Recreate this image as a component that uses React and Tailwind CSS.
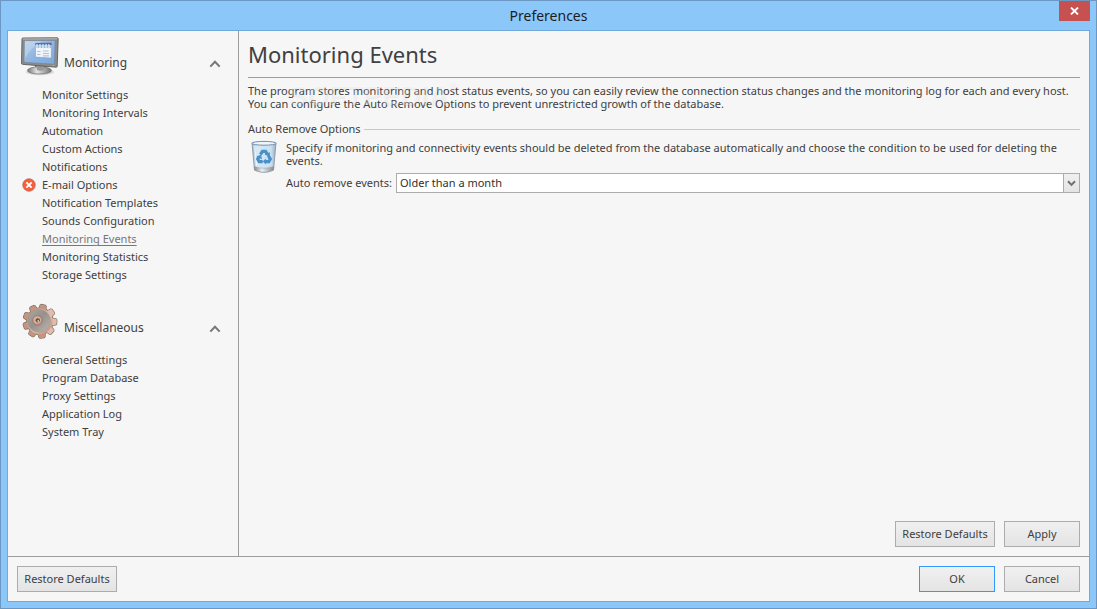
import React from "react";

const sections = [
  {
    title: "Monitoring",
    Icon: MonitorIcon,
    items: [
      { label: "Monitor Settings" },
      { label: "Monitoring Intervals" },
      { label: "Automation" },
      { label: "Custom Actions" },
      { label: "Notifications" },
      { label: "E-mail Options", error: true },
      { label: "Notification Templates" },
      { label: "Sounds Configuration" },
      { label: "Monitoring Events", current: true },
      { label: "Monitoring Statistics" },
      { label: "Storage Settings" },
    ],
  },
  {
    title: "Miscellaneous",
    Icon: GearIcon,
    items: [
      { label: "General Settings" },
      { label: "Program Database" },
      { label: "Proxy Settings" },
      { label: "Application Log" },
      { label: "System Tray" },
    ],
  },
];

function MonitorIcon() {
  return (
    <svg width="40" height="40" viewBox="0 0 40 40" aria-hidden="true">
      <defs>
        <linearGradient id="screen" x1="0" y1="0" x2="1" y2="1">
          <stop offset="0" stopColor="#b4cdea" />
          <stop offset="0.5" stopColor="#8fb5e0" />
          <stop offset="1" stopColor="#7aa8dc" />
        </linearGradient>
        <linearGradient id="stand" x1="0" y1="0" x2="1" y2="0">
          <stop offset="0" stopColor="#777" />
          <stop offset="0.4" stopColor="#e4e4e4" />
          <stop offset="1" stopColor="#707070" />
        </linearGradient>
      </defs>
      <ellipse cx="20" cy="36" rx="14" ry="3.2" fill="#000" opacity="0.12" />
      <path d="M15 29h11v6H15z" fill="#6f6f6f" />
      <ellipse cx="19.5" cy="34.4" rx="12" ry="3.6" fill="url(#stand)" stroke="#707070" strokeWidth="0.7" />
      <path d="M16 29l1 5q3 1.5 7 0l1-4z" fill="#999" />
      <path d="M2 2.8Q2 2 3 2l34-.2q1.2 0 1.200 1l-1 27.400q0 1-1 1L2.500 28.300q-1 0-1-1z" fill="#8b8c8d" stroke="#5b5c5d" strokeWidth="0.9" />
      <path d="M2.800 3l34.400-.2" stroke="#c9c9c9" strokeWidth="0.8" />
      <path d="M4.500 4.700l30.600-.2-.7 23.700-30.300-1.900z" fill="url(#screen)" stroke="#6b7480" strokeWidth="0.4" />
      <path d="M4.900 5h17.500Q9 12 4.500 24z" fill="#fff" opacity="0.22" />
      <path d="M15.500 7.500l16-.3-.3 14.800-15.700-.9z" fill="#f0f5fc" stroke="#8197b3" strokeWidth="0.5" />
      <path d="M15.300 6.900l16.400-.2v2.300H15.300z" fill="#4f76a8" />
      <path d="M15.500 9h16v3h-16z" fill="#9dbde0" />
      <path d="M17 8v4m3-4v4m3-4v4m3-4v4m3-4v4" stroke="#e9f2fb" strokeWidth="1.200" />
      <circle cx="30.200" cy="7.900" r="0.700" fill="#a33d54" />
      <path d="M17 15.500h3.500m2.500-.5h5.500M17 18.500h3.500m2.500-1h6m-6 2.300h6" stroke="#b3c0d3" strokeWidth="1.200" />
      <path d="M32.500 29.400h1.600" stroke="#85dc55" strokeWidth="1" />
    </svg>
  );
}

function GearIcon() {
  const teeth = [0, 40, 80, 120, 160, 200, 240, 280, 320];
  return (
    <svg width="40" height="40" viewBox="0 0 40 40" aria-hidden="true">
      <defs>
        <linearGradient id="copper" gradientUnits="userSpaceOnUse" x1="4" y1="4" x2="34" y2="34">
          <stop offset="0" stopColor="#a88474" />
          <stop offset="0.350" stopColor="#c9a595" />
          <stop offset="0.600" stopColor="#e0beac" />
          <stop offset="1" stopColor="#b98068" />
        </linearGradient>
        <linearGradient id="steel" x1="0" y1="0" x2="1" y2="1">
          <stop offset="0" stopColor="#aaa6a2" />
          <stop offset="0.450" stopColor="#96918d" />
          <stop offset="1" stopColor="#bcb7b2" />
        </linearGradient>
      </defs>
      <g transform="translate(2 1.500) scale(.94)">
        <g transform="rotate(12 19 20)">
          <g fill="#7b6d66" stroke="#7b6d66" strokeWidth="1.300" strokeLinejoin="round">
            <circle cx="19" cy="20" r="14" />
            {teeth.map((a) => (
              <path key={a} transform={`rotate(${a} 19 20)`} d="M15 9l.8-6 1-.9h4.400l1 .9.800 6z" />
            ))}
          </g>
          <circle cx="19" cy="20" r="14" fill="#c99a84" />
          {teeth.map((a) => (
            <path
              key={a}
              transform={`rotate(${a} 19 20)`}
              d="M15 9l.8-6 1-.9h4.400l1 .9.800 6z"
              fill={a > 30 && a < 130 ? "#e0bdac" : "#c39580"}
            />
          ))}
        </g>
        <circle cx="19" cy="20" r="13.500" fill="url(#copper)" />
        <circle cx="18.300" cy="19.700" r="12" fill="url(#steel)" stroke="#9b8e86" strokeWidth="0.400" />
        <circle cx="16.500" cy="19" r="5.300" fill="#b98c78" stroke="#8c7266" strokeWidth="0.600" />
        <circle cx="16.200" cy="18.600" r="4" fill="#d8ae9a" />
        <circle cx="16.800" cy="19" r="2.300" fill="#5d5353" />
        <circle cx="17.300" cy="19.700" r="1" fill="#d5cbc6" />
      </g>
    </svg>
  );
}

function RecycleBinIcon() {
  return (
    <svg width="28" height="34" viewBox="0 0 28 34" aria-hidden="true">
      <defs>
        <linearGradient id="glass" x1="0" y1="0" x2="1" y2="0">
          <stop offset="0" stopColor="#a9bdcd" />
          <stop offset="0.200" stopColor="#d8e9f7" />
          <stop offset="0.800" stopColor="#c9dff2" />
          <stop offset="1" stopColor="#97abbc" />
        </linearGradient>
        <linearGradient id="base" x1="0" y1="0" x2="1" y2="0">
          <stop offset="0" stopColor="#82888d" />
          <stop offset="0.400" stopColor="#eceeef" />
          <stop offset="1" stopColor="#84898d" />
        </linearGradient>
      </defs>
      <path d="M2 3l2.500 27q9.500 4.500 19 0L26 3z" fill="url(#glass)" stroke="#8797a5" strokeWidth="0.900" />
      <path d="M4.200 26.500l.5 3.800q9.300 4 18.600 0l.5-3.800q-9.800 3.500-19.600 0z" fill="url(#base)" stroke="#949ca2" strokeWidth="0.500" />
      <ellipse cx="14" cy="3.300" rx="12.200" ry="1.900" fill="#eef6fd" stroke="#7390a8" strokeWidth="1" />
      <path d="M4.700 6l1.800 20" stroke="#fff" strokeWidth="1" opacity="0.700" />
      <g fill="none" stroke="#4a90c4" strokeWidth="3.200">
        <path d="M10.400 14.600L12.400 11.300h3.200l1.700 2.900" />
        <path d="M18.400 15.700l1.900 3.300-1.500 2.700h-3.600" />
        <path d="M12.700 21.700H9.200L7.700 19l1.500-2.700" />
      </g>
      <g fill="#4a90c4">
        <path d="M14.500 14.500l5.400-2.300v4.600z" />
        <path d="M15.900 18.600v6l-3.200-3z" />
        <path d="M6.400 16.600l4.700-1.900.9 4.700z" />
      </g>
    </svg>
  );
}

function ErrorIcon() {
  return (
    <svg width="14" height="14" viewBox="0 0 14 14" role="img" aria-label="Error">
      <circle cx="7" cy="7" r="6.200" fill="#fb5d37" stroke="#bb6a55" strokeWidth="0.900" />
      <path d="M4.400 4.400l5.200 5.200m0-5.200l-5.200 5.200" stroke="#fff" strokeWidth="2" />
    </svg>
  );
}

function NavSection({ title, Icon, items }) {
  return (
    <section>
      <button type="button" aria-expanded="true" className="flex h-10 w-full items-start text-left">
        <Icon />
        <span className="mt-4 ml-1 flex-1 text-[12px] leading-[22px]">{title}</span>
        <svg className="mt-[23px] mr-[17px]" width="12" height="9" viewBox="0 0 12 9" aria-hidden="true">
          <path d="M1.300 7.600L6 2.700l4.700 4.900" fill="none" stroke="#777" strokeWidth="2" />
        </svg>
      </button>
      <ul className="mt-2.5">
        {items.map((item) => (
          <li key={item.label} className="flex h-[18px] items-center">
            <span className="flex w-[22px] pl-[2px]">{item.error && <ErrorIcon />}</span>
            <a
              href="#"
              aria-current={item.current ? "page" : undefined}
              className={item.current ? "text-[#777] underline underline-offset-2" : ""}
            >
              {item.label}
            </a>
          </li>
        ))}
      </ul>
    </section>
  );
}

function Button({ children, wide, primary }) {
  return (
    <button
      type="button"
      className={`h-[26px] border bg-linear-to-b from-[#f0f0f0] to-[#e4e4e4] ${wide ? "w-[100px]" : "w-[76px]"} ${
        primary ? "border-[#3399ff]" : "border-[#acacac]"
      }`}
    >
      {children}
    </button>
  );
}

export default function App() {
  return (
    <div className="flex min-h-screen flex-col border border-[#6c97c2] bg-[#8cc7fa] px-1.5 pb-1.5 font-['Noto_Sans','Open_Sans',sans-serif] text-[11px] leading-[18px] text-[#404040]">
      <header className="relative flex h-[29px] shrink-0 items-center justify-center">
        <span className="text-[14px] text-[#1c1c1c]">Preferences</span>
        <button
          type="button"
          aria-label="Close"
          className="absolute top-0 right-0 flex h-5 w-[31px] items-center justify-center bg-[#c75050]"
        >
          <svg width="9" height="8" viewBox="0 0 9 8" aria-hidden="true">
            <path d="M1 .5l7 7m0-7l-7 7" stroke="#fff" strokeWidth="1.800" />
          </svg>
        </button>
      </header>

      <div className="flex flex-1 flex-col border border-[#72a9dc] bg-[#f6f6f6]">
        <div className="flex flex-1">
          <nav aria-label="Preferences" className="flex w-[231px] shrink-0 flex-col gap-[17px] border-r border-[#9c9c9c] pt-[5px] pl-3">
            {sections.map((s) => (
              <NavSection key={s.title} {...s} />
            ))}
          </nav>

          <main className="flex min-w-0 flex-1 flex-col px-[9px] pb-[9px]">
            <h1 className="border-b border-[#9c9c9c] pt-[5px] pb-[5px] text-[22px] leading-9">Monitoring Events</h1>
            <div className="relative mt-1.5 leading-[13px]">
              <p>
                The program stores monitoring and host status events, so you can easily review the connection status
                changes and the monitoring log for each and every host.
              </p>
              <p>You can configure the Auto Remove Options to prevent unrestricted growth of the database.</p>
              <span
                aria-hidden="true"
                className="pointer-events-none absolute -top-1 left-10 flex items-start font-['Liberation_Sans',sans-serif] text-[28px] leading-8 font-bold text-white/30 [text-shadow:1px_1px_1px_rgba(0,0,0,0.05)]"
              >
                SOFTPEDIA<span className="text-[12px] leading-3">®</span>
              </span>
            </div>

            <fieldset className="mt-2.5">
              <legend className="flex w-full items-center gap-[3px]">
                Auto Remove Options
                <span className="h-px flex-1 bg-[#c8c8c8]" />
              </legend>
              <div className="mt-[2px] flex gap-2.5 pl-[2px]">
                <div className="w-[26px] shrink-0">
                  <RecycleBinIcon />
                </div>
                <div className="min-w-0 flex-1">
                  <p className="mt-px leading-[13px]">
                    Specify if monitoring and connectivity events should be deleted from the database automatically and
                    choose the condition to be used for deleting the events.
                  </p>
                  <div className="mt-1.5 flex items-center">
                    <label htmlFor="auto-remove" className="w-[110px] shrink-0">
                      Auto remove events:
                    </label>
                    <div className="relative flex-1">
                      <select
                        id="auto-remove"
                        defaultValue="month"
                        className="block h-5 w-full appearance-none border border-[#acacac] bg-white pr-5 pl-[3px] leading-[18px] text-[#303030]"
                      >
                        <option value="never">Never</option>
                        <option value="week">Older than a week</option>
                        <option value="month">Older than a month</option>
                      </select>
                      <span className="pointer-events-none absolute inset-y-0 right-0 flex w-[17px] items-center justify-center border border-[#acacac] bg-linear-to-b from-[#f0f0f0] to-[#e4e4e4]">
                        <svg width="9" height="7" viewBox="0 0 9 7" aria-hidden="true">
                          <path d="M1 1.200L4.500 4.900 8 1.200" fill="none" stroke="#707070" strokeWidth="2" />
                        </svg>
                      </span>
                    </div>
                  </div>
                </div>
              </div>
            </fieldset>

            <div className="mt-auto flex justify-end gap-[9px]">
              <Button wide>Restore Defaults</Button>
              <Button>Apply</Button>
            </div>
          </main>
        </div>

        <footer className="flex gap-[9px] border-t border-[#9c9c9c] p-[9px]">
          <Button wide>Restore Defaults</Button>
          <span className="flex-1" />
          <Button primary>OK</Button>
          <Button>Cancel</Button>
        </footer>
      </div>
    </div>
  );
}
